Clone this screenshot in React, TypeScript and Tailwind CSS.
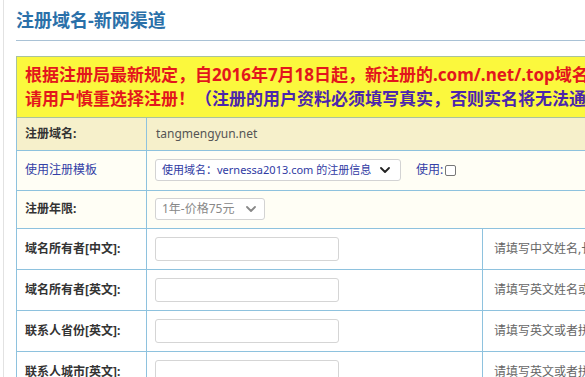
import React from 'react';

const font = { fontFamily: '"Noto Sans", "Noto Sans CJK SC", sans-serif' };

const Chevron = ({ className = '' }: { className?: string }) => (
  <svg viewBox="0 0 10 6" className={className} fill="none">
    <path d="M1 1l4 4 4-4" stroke="currentColor" strokeWidth="1.8" strokeLinecap="round" strokeLinejoin="round" />
  </svg>
);

const fields = [
  { label: '域名所有者[中文]:', tip: '请填写中文姓名,长度不能超过30个字符' },
  { label: '域名所有者[英文]:', tip: '请填写英文姓名或者拼音' },
  { label: '联系人省份[英文]:', tip: '请填写英文或者拼音' },
  { label: '联系人城市[英文]:', tip: '请填写英文或者拼音' },
];

const labelCell = 'border border-[#8ec2de] pl-[8px] text-[12px] font-bold text-[#333] whitespace-nowrap';

export default function App() {
  return (
    <div className="h-[377px] w-[585px] overflow-hidden bg-white" style={font}>
      <div className="ml-[3px] h-full w-[900px] border-l border-[#e2e2e2] pl-[12px]">
        <div className="border-b border-[#a9c2d6] pt-[9px] pb-[9px]">
          <h1 className="text-[18px] leading-[22px] font-bold text-[#2a70a9]">注册域名-新网渠道</h1>
        </div>

        <div className="mt-[15px] border border-[#a9c39c] bg-[#fbf83d] px-[8px] py-[6px] text-[17px] leading-[24px] font-bold whitespace-nowrap">
          <div className="text-[#e3161c]">根据注册局最新规定，自2016年7月18日起，新注册的.com/.net/.top域名需要实名认证，</div>
          <div>
            <span className="text-[#e3161c]">请用户慎重选择注册！</span>
            <span className="text-[#4b25ad]">（注册的用户资料必须填写真实，否则实名将无法通过审核）</span>
          </div>
        </div>

        <table className="w-[800px] border-collapse">
          <tbody>
            <tr className="h-[32px] bg-[#f6f0cb]">
              <td className={`${labelCell} w-[130px] border-t-0`}>注册域名:</td>
              <td colSpan={2} className="border border-t-0 border-[#8ec2de] pl-[9px] text-[12px] text-[#555]">
                tangmengyun.net
              </td>
            </tr>
            <tr className="h-[40px] bg-[#fffef5]">
              <td className="border border-[#8ec2de] pl-[8px] text-[12px] text-[#3340a6]">使用注册模板</td>
              <td colSpan={2} className="border border-[#8ec2de] pl-[8px]">
                <div className="flex items-center">
                  <div className="flex h-[22px] w-[246px] items-center justify-between rounded-[3px] border border-[#d3d3d3] bg-white pr-[10px] pl-[6px] text-[11px] whitespace-nowrap text-[#2f3aa3]">
                    <span>使用域名：vernessa2013.com 的注册信息</span>
                    <Chevron className="h-[6px] w-[10px] shrink-0 text-[#222]" />
                  </div>
                  <span className="ml-[15px] text-[12px] text-[#3340a6]">使用:</span>
                  <span className="ml-[2px] h-[11px] w-[11px] rounded-[2px] border border-[#777] bg-white" />
                </div>
              </td>
            </tr>
            <tr className="h-[38px] bg-[#fffef5]">
              <td className={labelCell}>注册年限:</td>
              <td colSpan={2} className="border border-[#8ec2de] pl-[8px]">
                <div className="flex h-[22px] w-[110px] items-center justify-between rounded-[3px] border border-[#d3d3d3] bg-white pr-[8px] pl-[6px] text-[12px] whitespace-nowrap text-[#888]">
                  <span>1年-价格75元</span>
                  <Chevron className="h-[6px] w-[10px] shrink-0 text-[#888]" />
                </div>
              </td>
            </tr>
            {fields.map((f) => (
              <tr key={f.label} className="h-[41px] bg-white">
                <td className={labelCell}>{f.label}</td>
                <td className="w-[336px] border border-[#8ec2de] pl-[8px]">
                  <div className="h-[24px] w-[184px] rounded-[3px] border border-[#d5d5d5] bg-white" />
                </td>
                <td className="border border-[#8ec2de] pl-[11px] text-[12px] whitespace-nowrap text-[#666]">{f.tip}</td>
              </tr>
            ))}
          </tbody>
        </table>
      </div>
    </div>
  );
}
